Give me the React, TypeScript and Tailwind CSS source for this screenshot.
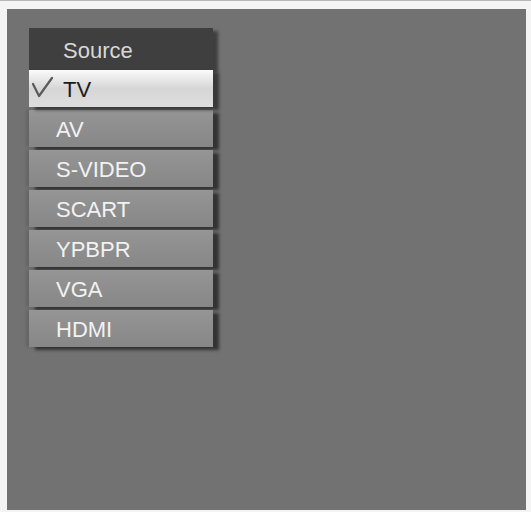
import React from 'react';

const sources = ['TV', 'AV', 'S-VIDEO', 'SCART', 'YPBPR', 'VGA', 'HDMI'];

function Tick() {
  return (
    <svg width="22" height="22" viewBox="0 0 22 22" className="absolute left-[3px] top-[6px]">
      <path d="M1 8 L7 20 L20 2" fill="none" stroke="#5a5a5a" strokeWidth="2.2" strokeLinecap="round" strokeLinejoin="round" />
    </svg>
  );
}

export default function App() {
  const selected = 'TV';

  return (
    <div
      className="w-[531px] h-[512px] bg-[#f4f4f4] border-t border-[#b8b8b8] pt-[8px] pl-[7px] pr-[5px] pb-[2px] flex"
      style={{ fontFamily: '"Liberation Sans", Arial, sans-serif' }}
    >
      <div className="flex-1 bg-[#727272] pt-[19px] pl-[22px]">
        <div className="w-[184px] flex flex-col gap-[3px]">
          {/* Title */}
          <div className="h-[42px] -mb-[3px] bg-[#3f3f3f] flex items-center pl-[34px] pt-[2px] text-[22px] text-[#d8d8d8] shadow-[5px_3px_3px_rgba(0,0,0,0.45)]">
            Source
          </div>

          {sources.map((s) =>
            s === selected ? (
              <div
                key={s}
                className="relative h-[37px] flex items-center pl-[34px] pt-[1px] text-[22px] text-[#1c1c1c] bg-gradient-to-b from-[#fbfbfb] via-[#d6d6d6] to-[#dedede] shadow-[6px_3px_3px_rgba(0,0,0,0.5)]"
              >
                <Tick />
                {s}
              </div>
            ) : (
              <div
                key={s}
                className="h-[37px] flex items-center pl-[27px] pt-[1px] text-[22px] text-[#f2f2f2] bg-gradient-to-b from-[#959595] to-[#878787] shadow-[6px_3px_3px_rgba(0,0,0,0.55),-3px_0_3px_rgba(0,0,0,0.12)]"
              >
                {s}
              </div>
            )
          )}
        </div>
      </div>
    </div>
  );
}
